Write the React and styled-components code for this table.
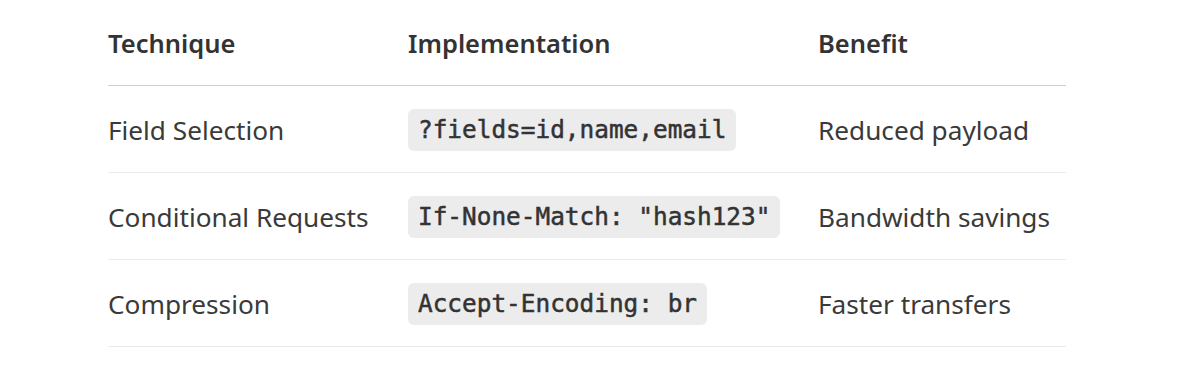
import React from 'react';
import styled, { createGlobalStyle } from 'styled-components';

const GlobalStyle = createGlobalStyle`
  body {
    margin: 0;
    background: #ffffff;
    font-family: "Noto Sans", "Open Sans", sans-serif;
    color: #333333;
  }
`;

const Page = styled.div`
  padding: 0 129px 0 108px;
`;

const Table = styled.div`
  display: grid;
  grid-template-columns: 300px 410px 1fr;
  width: 958px;
`;

const HeadCell = styled.div`
  display: flex;
  align-items: center;
  height: 85px;
  border-bottom: 1px solid #cfcfcf;
  font-size: 25.5px;
  font-weight: 600;
  color: #333333;
`;

const Cell = styled.div`
  display: flex;
  align-items: center;
  box-sizing: border-box;
  height: 87px;
  padding-top: 2px;
  border-bottom: 1px solid #ebebeb;
  font-size: 26.2px;
  color: #3a3a3a;
`;

const Code = styled.code`
  display: inline-block;
  padding: 6px 10px;
  border-radius: 6px;
  background: #ececec;
  font-family: "DejaVu Sans Mono", "Liberation Mono", monospace;
  font-size: 24.4px;
  font-weight: 400;
  -webkit-text-stroke: 0.5px #333333;
  line-height: 30px;
  color: #333333;
`;

const rows = [
  ['Field Selection', '?fields=id,name,email', 'Reduced payload'],
  ['Conditional Requests', 'If-None-Match: "hash123"', 'Bandwidth savings'],
  ['Compression', 'Accept-Encoding: br', 'Faster transfers'],
];

export default function App() {
  return (
    <>
      <GlobalStyle />
      <Page>
        <Table>
          <HeadCell>Technique</HeadCell>
          <HeadCell>Implementation</HeadCell>
          <HeadCell>Benefit</HeadCell>
          {rows.map(([technique, impl, benefit]) => (
            <React.Fragment key={technique}>
              <Cell>{technique}</Cell>
              <Cell>
                <Code>{impl}</Code>
              </Cell>
              <Cell>{benefit}</Cell>
            </React.Fragment>
          ))}
        </Table>
      </Page>
    </>
  );
}
